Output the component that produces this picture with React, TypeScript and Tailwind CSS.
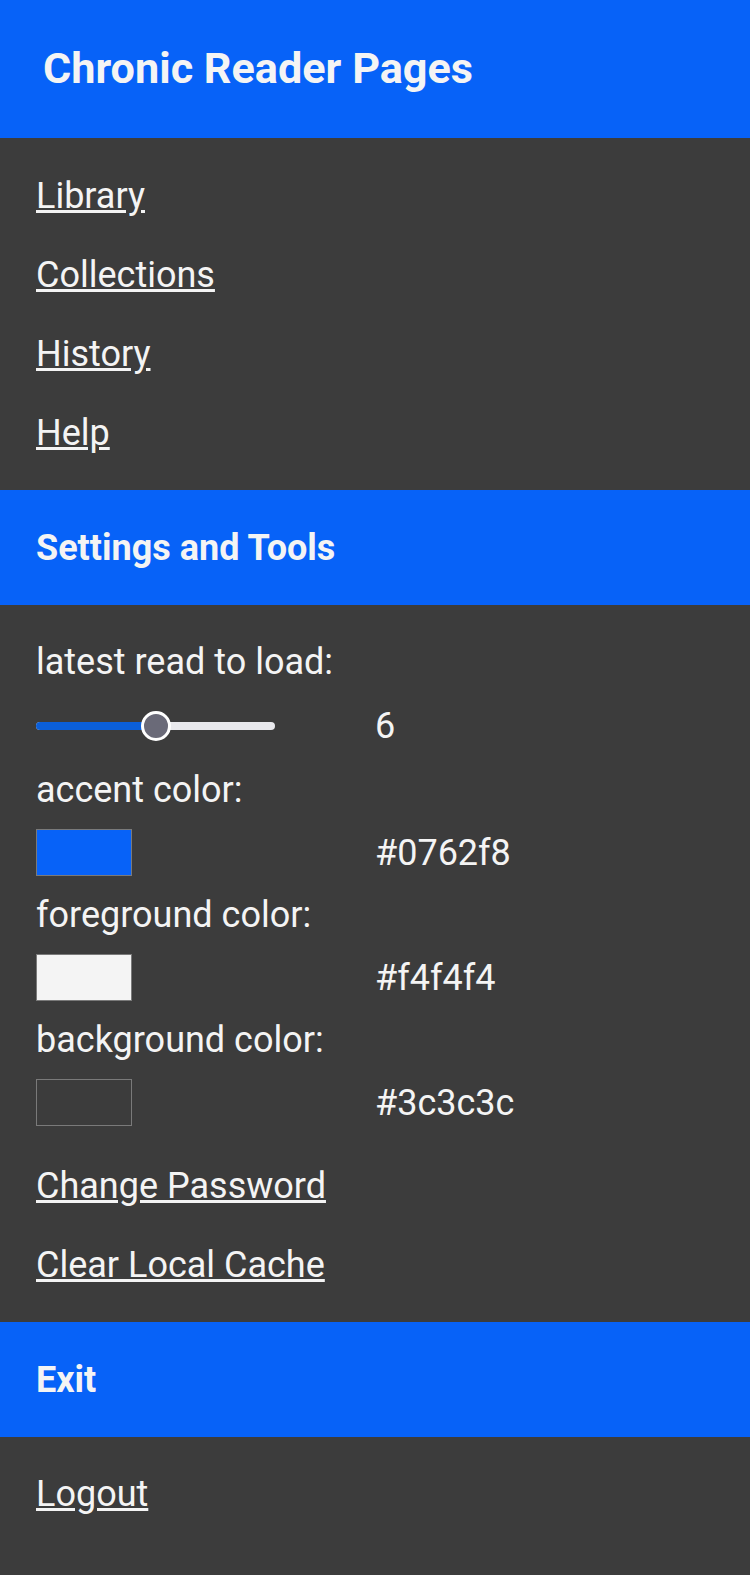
export default function App() {
  const nav = ["Library", "Collections", "History", "Help"];
  const colors = [
    { label: "accent color:", value: "#0762f8", swatch: "bg-[#0762f8]" },
    { label: "foreground color:", value: "#f4f4f4", swatch: "bg-[#f4f4f4]" },
    { label: "background color:", value: "#3c3c3c", swatch: "bg-[#3c3c3c]" },
  ];
  return (
    <div className="min-h-screen bg-[#3c3c3c] text-[#f4f4f4] font-[Roboto,sans-serif] text-[36px]">
      <header className="h-[138px] bg-[#0762f8] flex items-center pl-[43px]">
        <h1 className="text-[43.2px] font-bold leading-[50px]">Chronic Reader Pages</h1>
      </header>

      <nav className="pt-[19px] pb-[17px] px-[36px]">
        {nav.map((n) => (
          <div key={n} className="h-[79px] leading-[79px]">
            <a href="#" className="underline">{n}</a>
          </div>
        ))}
      </nav>

      <div className="h-[115px] bg-[#0762f8] flex items-center px-[36px]">
        <h2 className="font-bold leading-[42px]">Settings and Tools</h2>
      </div>

      <section className="pt-[36px] pb-[17px] px-[36px]">
        <div className="flex flex-col gap-[18px]">
          <div className="leading-[42px]">latest read to load:</div>
          <div className="grid grid-cols-2 items-center h-[50px]">
            <div className="relative w-[239px] h-[50px] flex items-center">
              <div className="h-[8px] w-full rounded-full bg-[#e9e9ed]" />
              <div className="absolute left-0 top-[21px] h-[8px] w-[122px] rounded-full bg-[#0b5fd9]" />
              <div className="absolute left-[105px] top-[10px] w-[30px] h-[30px] rounded-full bg-[#6a6a78] border-[3px] border-white" />
            </div>
            <div className="leading-[42px]">6</div>
          </div>
          {colors.map((c) => (
            <div key={c.label} className="flex flex-col gap-[18px]">
              <div className="leading-[42px]">{c.label}</div>
              <div className="grid grid-cols-2 items-center h-[47px]">
                <div className={`w-[96px] h-[47px] border border-[#7a7a7a] ${c.swatch}`} />
                <div className="leading-[42px]">{c.value}</div>
              </div>
            </div>
          ))}
        </div>
        <div className="mt-[21px]">
          <div className="h-[79px] leading-[79px]">
            <a href="#" className="underline">Change Password</a>
          </div>
          <div className="h-[79px] leading-[79px]">
            <a href="#" className="underline">Clear Local Cache</a>
          </div>
        </div>
      </section>

      <div className="h-[115px] bg-[#0762f8] flex items-center px-[36px]">
        <h2 className="font-bold leading-[42px]">Exit</h2>
      </div>

      <section className="pt-[18px] pb-[17px] px-[36px]">
        <div className="h-[79px] leading-[79px]">
          <a href="#" className="underline">Logout</a>
        </div>
      </section>
    </div>
  );
}
